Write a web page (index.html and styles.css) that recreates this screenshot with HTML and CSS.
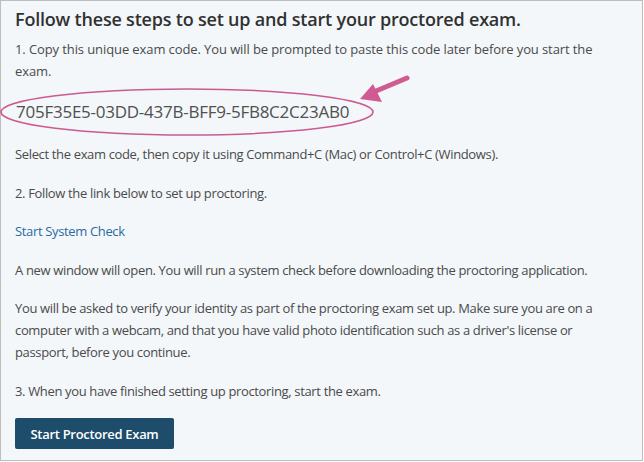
FILE: index.html
```html
<!DOCTYPE html>
<html>
<head>
<meta charset="utf-8">
<link rel="stylesheet" href="styles.css">
</head>
<body>
<div class="panel">
  <h3 class="title">Follow these steps to set up and start your proctored exam.</h3>
  <p class="step step-first">1. Copy this unique exam code. You will be prompted to paste this code later before you start the exam.</p>
  <div class="code">705F35E5-03DD-437B-BFF9-5FB8C2C23AB0</div>
  <p class="step">Select the exam code, then copy it using Command+C (Mac) or Control+C (Windows).</p>
  <p class="step">2. Follow the link below to set up proctoring.</p>
  <p class="step"><a class="link" href="#">Start System Check</a></p>
  <p class="step">A new window will open. You will run a system check before downloading the proctoring application.</p>
  <p class="step">You will be asked to verify your identity as part of the proctoring exam set up. Make sure you are on a computer with a webcam, and that you have valid photo identification such as a driver's license or passport, before you continue.</p>
  <p class="step">3. When you have finished setting up proctoring, start the exam.</p>
  <button class="btn">Start Proctored Exam</button>
  <svg class="annot" width="643" height="461" viewBox="0 0 643 461">
    <ellipse cx="187" cy="112" rx="186" ry="23" fill="none" stroke="#cc5a90" stroke-width="1.6"/>
    <line x1="407" y1="78" x2="376" y2="91" stroke="#d05b92" stroke-width="5" stroke-linecap="round"/>
    <polygon points="360,99 373,84 382,102" fill="#d05b92"/>
  </svg>
</div>
</body>
</html>
```
FILE: styles.css
```css
html, body {
  margin: 0;
  padding: 0;
  background: #ffffff;
}
.panel {
  box-sizing: border-box;
  width: 643px;
  height: 461px;
  border: 1px solid #bdbdbd;
  background: #f3f7fa;
  padding: 5px 20px 0 14px;
  font-family: "Open Sans", sans-serif;
  color: #4a4a4a;
  position: relative;
}
.title {
  margin: 0 0 6px 0;
  font-size: 18px;
  font-weight: 600;
  color: #313131;
  line-height: 26px;
  letter-spacing: -0.2px;
}
.step {
  margin: 0 0 16.5px 0;
  font-size: 13px;
  line-height: 22px;
  letter-spacing: -0.35px;
}
.step-first {
  letter-spacing: -0.1px;
  margin-bottom: 18px;
}
.code {
  font-size: 17px;
  line-height: 24px;
  padding-left: 1px;
  margin-bottom: 19px;
  color: #505050;
  letter-spacing: -0.25px;
}
.annot {
  position: absolute;
  left: -1px;
  top: -1px;
  pointer-events: none;
}
.link {
  color: #2b6aa3;
  text-decoration: none;
}
.btn {
  display: block;
  margin-top: 0;
  font-family: "Open Sans", sans-serif;
  font-size: 13px;
  font-weight: 600;
  letter-spacing: -0.3px;
  color: #ffffff;
  background: #1d4d6b;
  border: none;
  border-radius: 2px;
  width: 159px;
  height: 31px;
  padding: 0;
}
```
